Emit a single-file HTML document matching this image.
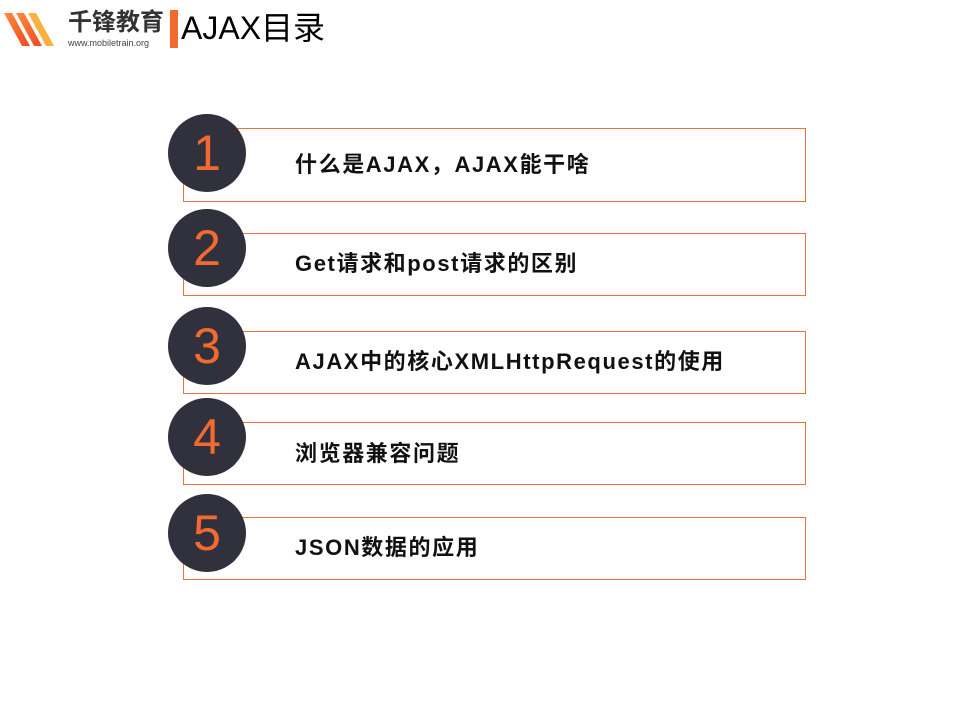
<!DOCTYPE html>
<html><head><meta charset="utf-8"><style>
body{margin:0;width:960px;height:720px;background:#fff;position:relative;overflow:hidden;font-family:"Liberation Sans","Noto Sans CJK SC",sans-serif}
.box{position:absolute;left:183px;width:621px;border:1px solid #f07040;background:#fff}
.c{position:absolute;left:168px;width:78px;height:78px;border-radius:50%;background:#30313c;color:#f26a30;font-size:50px;line-height:78px;text-align:center}
.t{position:absolute;left:295px;font-size:22px;letter-spacing:1.6px;font-weight:bold;color:#111;line-height:24px}
</style></head><body>
<svg style="position:absolute;left:4px;top:10px" width="60" height="40" viewBox="0 0 60 40">
<defs><linearGradient id="g" x1="0" y1="0" x2="1" y2="1"><stop offset="0" stop-color="#ff8a3c"/><stop offset="1" stop-color="#f04a1e"/></linearGradient></defs>
<polygon points="0,3 8,3 26,36 18,36" fill="url(#g)"/>
<polygon points="12,3 20,3 38,36 30,36" fill="url(#g)"/>
<polygon points="24,3 32,3 50,36 42,36" fill="#fbb040"/>
</svg>
<div style="position:absolute;left:68px;top:9px;font-size:24px;font-weight:bold;color:#333;line-height:28px">千锋教育</div>
<div style="position:absolute;left:68px;top:38px;font-size:9px;color:#444">www.mobiletrain.org</div>
<div style="position:absolute;left:170px;top:10px;width:8px;height:38px;background:#f26a30"></div>
<div style="position:absolute;left:181px;top:8px;font-size:32px;color:#000;line-height:40px">AJAX目录</div>

<div class="box" style="top:128px;height:72px"></div>
<div class="box" style="top:233px;height:61px"></div>
<div class="box" style="top:331px;height:61px"></div>
<div class="box" style="top:422px;height:61px"></div>
<div class="box" style="top:517px;height:61px"></div>

<div class="c" style="top:114px">1</div>
<div class="c" style="top:209px">2</div>
<div class="c" style="top:307px">3</div>
<div class="c" style="top:398px">4</div>
<div class="c" style="top:494px">5</div>

<div class="t" style="top:153px">什么是AJAX，AJAX能干啥</div>
<div class="t" style="top:252px">Get请求和post请求的区别</div>
<div class="t" style="top:350px">AJAX中的核心XMLHttpRequest的使用</div>
<div class="t" style="top:442px">浏览器兼容问题</div>
<div class="t" style="top:536px">JSON数据的应用</div>
</body></html>
